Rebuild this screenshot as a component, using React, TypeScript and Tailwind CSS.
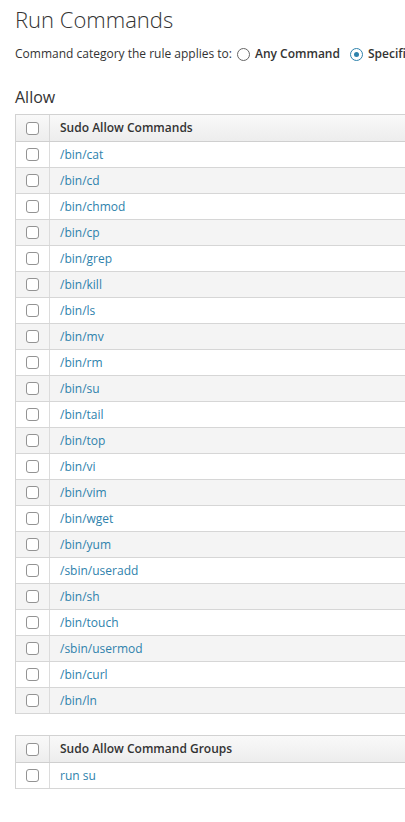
import React from "react";

const cmds = [
  "/bin/cat", "/bin/cd", "/bin/chmod", "/bin/cp", "/bin/grep", "/bin/kill", "/bin/ls", "/bin/mv", "/bin/rm", "/bin/su", "/bin/tail", "/bin/top", "/bin/vi", "/bin/vim", "/bin/wget", "/bin/yum", "/sbin/useradd", "/bin/sh", "/bin/touch", "/sbin/usermod", "/bin/curl", "/bin/ln",
];

function Box() {
  return <div className="w-[13px] h-[13px] border border-[#939393] rounded-[3px] bg-white" />;
}

function Table({ title, rows }: { title: string; rows: string[] }) {
  return (
    <div className="ml-[15px] w-[420px] border-l border-t border-[#d2d2d2]">
      <div className="flex h-[27px] border-b border-[#cfcfcf] bg-gradient-to-b from-[#f9f9f9] to-[#ededed]">
        <div className="w-[34px] shrink-0 border-r border-[#d8d8d8] flex items-center justify-center">
          <Box />
        </div>
        <div className="pl-[10px] flex items-center text-[12px] font-semibold text-[#333]">{title}</div>
      </div>
      {rows.map((r, i) => (
        <div key={r} className={`flex h-[26px] border-b border-[#d6d6d6] ${i % 2 === 1 ? "bg-[#f4f4f4]" : "bg-white"}`}>
          <div className="w-[34px] shrink-0 border-r border-[#dcdcdc] flex items-center justify-center">
            <Box />
          </div>
          <div className="pl-[10px] flex items-center text-[12px] text-[#2e82ac]">{r}</div>
        </div>
      ))}
    </div>
  );
}

export default function App() {
  return (
    <div className="w-[405px] h-[822px] overflow-hidden bg-white" style={{ fontFamily: '"Open Sans", sans-serif' }}>
      <div className="pl-[15px] pt-[3px] text-[22px] font-light text-[#333] leading-[32px] whitespace-nowrap">Run Commands</div>
      <div className="pl-[15px] mt-[11px] flex items-center text-[12px] text-[#333] whitespace-nowrap leading-[16px]">
        <span className="shrink-0">Command category the rule applies to:</span>
        <span className="shrink-0 ml-[5px] w-[13px] h-[13px] rounded-full border-[1.5px] border-[#666] bg-white" />
        <span className="shrink-0 ml-[5px] font-semibold">Any Command</span>
        <span className="shrink-0 ml-[10px] w-[13px] h-[13px] rounded-full border-[1.5px] border-[#2e82ac] bg-white flex items-center justify-center">
          <span className="w-[5px] h-[5px] rounded-full bg-[#2e82ac]" />
        </span>
        <span className="shrink-0 ml-[5px] font-semibold">Specific Commands</span>
      </div>
      <div className="pl-[15px] mt-[24px] text-[16px] text-[#333] leading-[22px]">Allow</div>
      <div className="mt-[6px]">
        <Table title="Sudo Allow Commands" rows={cmds} />
      </div>
      <div className="mt-[21px]">
        <Table title="Sudo Allow Command Groups" rows={["run su"]} />
      </div>
    </div>
  );
}
